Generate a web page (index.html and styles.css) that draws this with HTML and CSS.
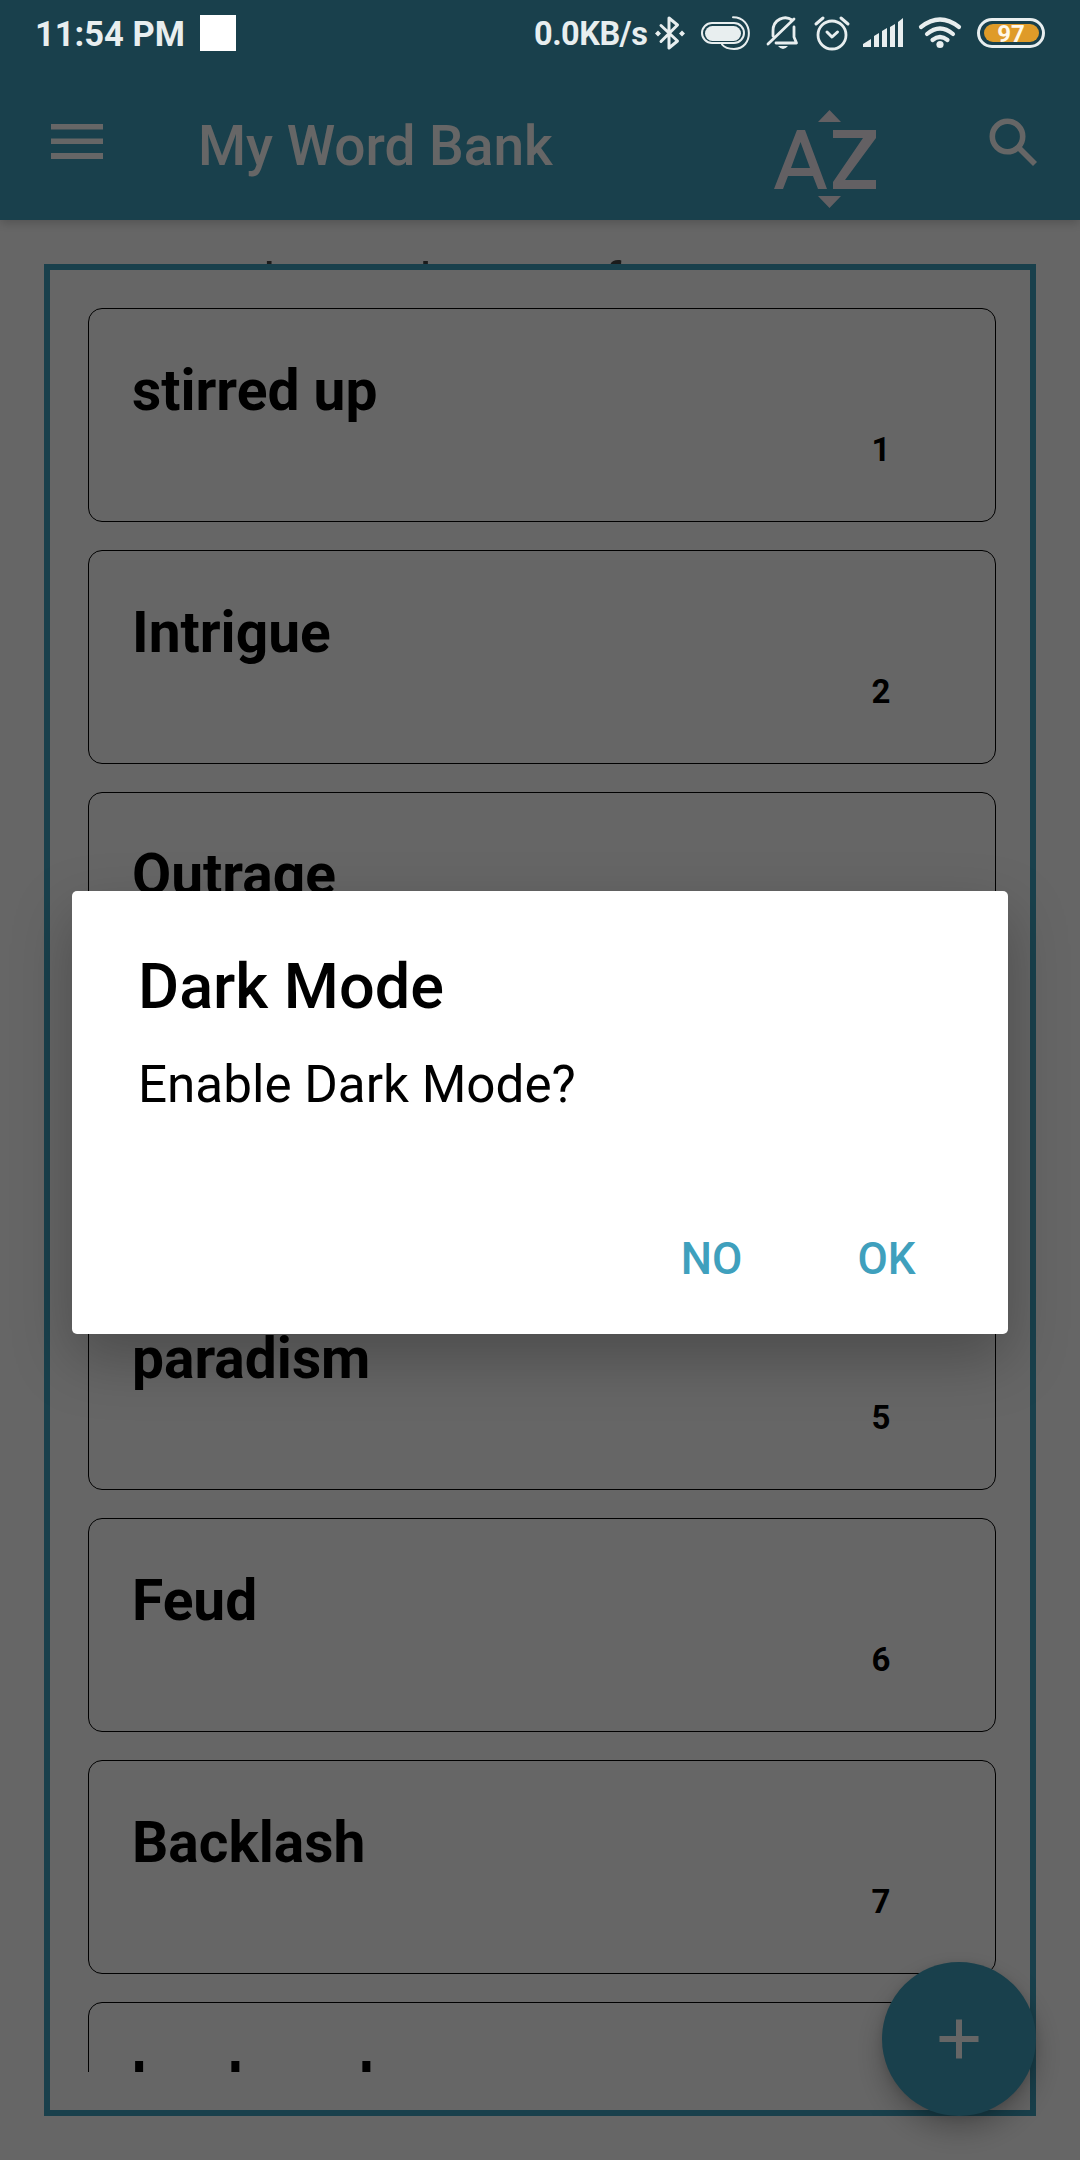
FILE: index.html
```
<!DOCTYPE html>
<html lang="en">
<head>
<meta charset="utf-8">
<title>My Word Bank</title>
<link rel="stylesheet" href="styles.css">
</head>
<body>
<div class="screen">
  <header class="app-bar">
    <svg class="menu-icon" width="52" height="36" viewBox="0 0 52 36"><path d="M0 0h52v5.500H0zM0 14.500h52v5.500H0zM0 29h52v6H0z"/></svg>
    <h1 class="app-title">My Word Bank</h1>
    <svg class="sort-icon" width="104" height="100" viewBox="0 0 104 100"><path d="M44 12L55.500 0L67 12zM44 86H67L55.500 98zM0 79L23 20h8L53 79h-9l-5-13H14l-5 13zM17 58h19L26.500 32zM59 20h43v8L71 70h31v9H59v-7L89 28H59z" fill-rule="evenodd"/></svg>
    <svg class="search-icon" width="50" height="50" viewBox="0 0 50 50"><circle cx="18.500" cy="18.500" r="15.200"/><path d="M30 30L46 46"/></svg>
  </header>
  <main class="content">
    <p class="hint">learned ones of</p>
    <section class="frame">
      <ul class="words">
        <li class="card"><span class="word">stirred up</span><span class="num">1</span></li>
        <li class="card"><span class="word">Intrigue</span><span class="num">2</span></li>
        <li class="card"><span class="word">Outrage</span><span class="num">3</span></li>
        <li class="card"></li>
        <li class="card"><span class="word">paradism</span><span class="num">5</span></li>
        <li class="card"><span class="word">Feud</span><span class="num">6</span></li>
        <li class="card"><span class="word">Backlash</span><span class="num">7</span></li>
        <li class="card"><span class="word">bookmark</span></li>
      </ul>
    </section>
  </main>
  <button class="fab" aria-label="Add word"><svg width="40" height="40" viewBox="0 0 40 40"><path d="M20 0.500v39M0.500 20h39"/></svg></button>
</div>
<div class="scrim">
  <div class="status-bar">
    <span class="clock">11:54 PM</span>
    <span class="notice"></span>
    <span class="speed">0.0KB/s</span>
    <svg class="status-icons" width="400" height="70" viewBox="650 0 400 70">
      <g class="line">
        <path d="M661 25.500L677.500 41L669 48V18L677.500 25L661 41.500" stroke-width="3"/>
        <rect x="702" y="23" width="42" height="20" rx="10" stroke-width="2"/>
        <path d="M733 17.200C754 17 754 49 734 49C729 49 724 47 722 44.500" stroke-width="2"/>
        <path d="M773 36V31C773 19 785 15 792 20M794 27V37L796.500 43H776M768 44L794 19" stroke-width="2.800"/>
        <circle cx="832" cy="35" r="14" stroke-width="2.800"/>
        <path d="M827 32L832 37L837.500 32M816 24L823 18M848 24L841 18" stroke-width="3"/>
        <path d="M921 27Q940 12 959 27M927 34Q940 23 953 34M932.500 40Q940 34 947.500 40" stroke-width="4.200"/>
        <rect x="978.500" y="19.500" width="65" height="27" rx="13.500" stroke-width="3"/>
      </g>
      <g class="solid">
        <path d="M655 33.500l3-3 3 3-3 3zM679 33.500l3-3 3 3-3 3z"/>
        <rect x="705" y="26" width="36" height="15" rx="7.500"/>
        <path d="M778 46h10q-5 6-10 0zM863 44L871 39V47H863zM874 36L879 33V47H874zM882 31L887 28V47H882zM890 27L895 24V47H890zM898 22L903 18V47H898z"/>
        <circle cx="940" cy="44.500" r="3.600"/>
      </g>
      <rect class="charge" x="984" y="24" width="55" height="18" rx="9"/>
      <text class="percent" x="1011" y="41.500" text-anchor="middle">97</text>
    </svg>
  </div>
  <div class="dialog">
    <h2 class="dialog-title">Dark Mode</h2>
    <p class="dialog-text">Enable Dark Mode?</p>
    <div class="actions"><button class="action">NO</button><button class="action">OK</button></div>
  </div>
</div>
</body>
</html>
```
FILE: styles.css
```
* { box-sizing: border-box; margin: 0; padding: 0; }
body { width: 1080px; height: 2160px; overflow: hidden; font-family: Roboto, sans-serif; color: #000; }
button { border: 0; background: none; font: inherit; }
.screen { width: 1080px; height: 2160px; display: flex; flex-direction: column; background: #fff; }
.app-bar { height: 220px; flex: none; padding: 69px 41px 0 51px; display: flex; align-items: flex-start; background: #3fa0bd; box-shadow: 0 3px 10px rgba(0,0,0,.2); z-index: 1; }
.menu-icon { margin-top: 55px; fill: #fff; }
.app-title { margin: 44px 0 0 95px; font-size: 55px; line-height: 66px; font-weight: 500; flex: 1; color: #fff; }
.sort-icon { margin: 41px 111px 0 0; fill: #f8eff8; }
.search-icon { margin-top: 49px; fill: none; stroke: #fff; stroke-width: 5.600px; }
.content { height: 1896px; padding: 33px 44px 0; display: flex; flex-direction: column; }
.hint { height: 11px; flex: none; padding-left: 219px; font-size: 51px; line-height: 60px; word-spacing: 3.500px; color: #444; overflow: hidden; white-space: nowrap; }
.frame { width: 992px; height: 1852px; flex: none; border: 6px solid #3fa0bd; padding: 38px 34px 38px 38px; }
.words { height: 1764px; overflow: hidden; list-style: none; display: flex; flex-direction: column; gap: 28px; }
.card { height: 214px; flex: none; border: 1px solid #000; border-radius: 14px; padding: 49px 0 0 43px; display: flex; flex-direction: column; }
.word { font-size: 56.900px; line-height: 66px; font-weight: 700; }
.num { width: 40px; margin: 6px 0 0 729px; font-size: 33px; line-height: 40px; font-weight: 700; text-align: center; }
.fab { position: absolute; left: 882px; top: 1962px; width: 154px; height: 154px; border-radius: 50%; background: #3fa0bd; display: grid; place-items: center; box-shadow: 0 14px 28px rgba(0,0,0,.25), 0 2px 10px rgba(0,0,0,.12); }
.fab svg { fill: none; stroke: #fff; stroke-width: 6px; }
.scrim { position: absolute; left: 0; top: 0; z-index: 2; width: 1080px; height: 2160px; background: rgba(0,0,0,.6); display: flex; flex-direction: column; }
.status-bar { height: 70px; padding-left: 35px; display: flex; color: #e8eeef; font-weight: 700; }
.clock { width: 165px; font-size: 34.500px; line-height: 68px; white-space: nowrap; }
.notice { width: 36px; height: 36px; margin-top: 15px; background: #fff; }
.speed { width: 116px; margin-left: 298px; font-size: 32.500px; line-height: 68px; letter-spacing: -.5px; }
.line { fill: none; stroke: #e8eeef; stroke-linecap: round; stroke-linejoin: round; }
.solid { fill: #e8eeef; }
.charge { fill: #df9b28; }
.percent { fill: #fff8e8; font-size: 24px; font-weight: 700; }
.dialog { width: 936px; height: 443px; margin: 821px 0 0 72px; padding: 58px 34px 0 66px; display: flex; flex-direction: column; background: #fff; border-radius: 5px; box-shadow: 0 24px 60px rgba(0,0,0,.26); }
.dialog-title { font-size: 63px; line-height: 76px; font-weight: 500; }
.dialog-text { margin-top: 29px; font-size: 51.200px; line-height: 62px; }
.actions { margin-top: 111px; display: flex; justify-content: flex-end; }
.action { width: 175px; height: 64px; color: #3fa0bd; font-size: 44px; line-height: 64px; font-weight: 500; }
```
